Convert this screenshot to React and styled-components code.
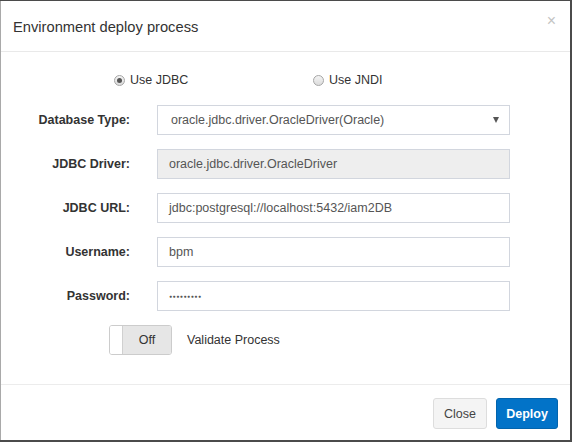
import React from "react";
import styled, { createGlobalStyle } from "styled-components";

const Global = createGlobalStyle`
  html, body { margin: 0; padding: 0; }
  body {
    background: #4b4b4b;
    font-family: "Liberation Sans", Arial, sans-serif;
    width: 572px;
    height: 442px;
    overflow: hidden;
  }
  * { box-sizing: border-box; }
`;

const Modal = styled.div`
  margin-top: 1px;
  width: 570px;
  height: 439px;
  background: #fff;
  border-left: 1px solid #a9a9a9;
  display: flex;
  flex-direction: column;
`;

const Header = styled.div`
  height: 51px;
  border-bottom: 1px solid #e9e9e9;
  display: flex;
  align-items: center;
  justify-content: space-between;
  padding: 0 14px 2px 12px;
`;

const Title = styled.h4`
  margin: 0;
  font-size: 14.7px;
  font-weight: normal;
  color: #333;
  position: relative;
  top: 2px;
`;

const CloseX = styled.span`
  font-size: 16px;
  color: #c4c4c4;
  line-height: 1;
  position: relative;
  top: -4px;
`;

const Body = styled.div`
  flex: 1;
  padding: 20px 0 0 0;
  display: flex;
  flex-direction: column;
`;

const RadioRow = styled.div`
  height: 16px;
  display: flex;
  align-items: center;
  padding-left: 113px;
  margin-bottom: 17px;
`;

const RadioOption = styled.label`
  display: flex;
  align-items: center;
  gap: 5px;
  font-size: 12.5px;
  color: #333;
  width: ${(p) => p.$width}px;
`;

const RadioDot = styled.span`
  width: 11px;
  height: 11px;
  border-radius: 50%;
  border: 1px solid #a6a6a6;
  background: linear-gradient(#f4f4f4, #dcdcdc);
  display: flex;
  align-items: center;
  justify-content: center;
  &::after {
    content: "";
    width: 5px;
    height: 5px;
    border-radius: 50%;
    background: ${(p) => (p.$checked ? "#555" : "transparent")};
  }
`;

const Form = styled.div`
  display: grid;
  grid-template-columns: 129px 353px;
  column-gap: 27px;
  row-gap: 14px;
  align-items: center;
`;

const Label = styled.label`
  text-align: right;
  font-size: 12.5px;
  font-weight: bold;
  color: #333;
`;

const Field = styled.div`
  height: 30px;
  border: 1px solid #d2d6de;
  background: ${(p) => (p.$disabled ? "#eeeeee" : "#fff")};
  display: flex;
  align-items: center;
  justify-content: space-between;
  padding: 0 ${(p) => (p.$select ? "10px" : "11px")} 0 ${(p) => (p.$select ? "13px" : "11px")};
  font-size: 12.5px;
  color: #555;
`;

const Caret = styled.span`
  width: 0;
  height: 0;
  border-left: 3px solid transparent;
  border-right: 3px solid transparent;
  border-top: 6px solid #555;
`;

const Dots = styled.span`
  font-size: 5px;
  letter-spacing: 0.6px;
  color: #555;
`;

const ToggleRow = styled.div`
  display: flex;
  align-items: center;
  gap: 15px;
  padding-left: 108px;
  margin-top: 14px;
`;

const Toggle = styled.div`
  width: 63px;
  height: 30px;
  border: 1px solid #ccc;
  border-radius: 3px;
  display: flex;
  overflow: hidden;
`;

const Handle = styled.span`
  width: 12px;
  background: #fff;
`;

const ToggleLabel = styled.span`
  flex: 1;
  background: #e6e6e6;
  border-left: 1px solid #d0d0d0;
  display: flex;
  align-items: center;
  justify-content: center;
  font-size: 12.5px;
  color: #333;
`;

const ToggleText = styled.span`
  font-size: 12.5px;
  color: #333;
`;

const Footer = styled.div`
  height: 56px;
  border-top: 1px solid #ececec;
  display: flex;
  justify-content: flex-end;
  align-items: flex-start;
  gap: 9px;
  padding: 13px 12px 0 0;
`;

const Button = styled.button`
  height: 31px;
  padding: 0;
  width: ${(p) => (p.$primary ? "62px" : "54px")};
  border-radius: 3px;
  font-family: "Liberation Sans", Arial, sans-serif;
  font-size: 12.5px;
  font-weight: ${(p) => (p.$primary ? "bold" : "normal")};
  background: ${(p) => (p.$primary ? "#0273c8" : "#f4f4f4")};
  color: ${(p) => (p.$primary ? "#fff" : "#444")};
  border: 1px solid ${(p) => (p.$primary ? "#0264ad" : "#dddddd")};
`;

export default function App() {
  return (
    <>
      <Global />
      <Modal>
        <Header>
          <Title>Environment deploy process</Title>
          <CloseX>×</CloseX>
        </Header>
        <Body>
          <RadioRow>
            <RadioOption $width={199}>
              <RadioDot $checked />
              Use JDBC
            </RadioOption>
            <RadioOption $width={100}>
              <RadioDot />
              Use JNDI
            </RadioOption>
          </RadioRow>
          <Form>
            <Label>Database Type:</Label>
            <Field $select>
              oracle.jdbc.driver.OracleDriver(Oracle)
              <Caret />
            </Field>
            <Label>JDBC Driver:</Label>
            <Field $disabled>oracle.jdbc.driver.OracleDriver</Field>
            <Label>JDBC URL:</Label>
            <Field>jdbc:postgresql://localhost:5432/iam2DB</Field>
            <Label>Username:</Label>
            <Field>bpm</Field>
            <Label>Password:</Label>
            <Field>
              <Dots>●●●●●●●●●</Dots>
            </Field>
          </Form>
          <ToggleRow>
            <Toggle>
              <Handle />
              <ToggleLabel>Off</ToggleLabel>
            </Toggle>
            <ToggleText>Validate Process</ToggleText>
          </ToggleRow>
        </Body>
        <Footer>
          <Button>Close</Button>
          <Button $primary>Deploy</Button>
        </Footer>
      </Modal>
    </>
  );
}
